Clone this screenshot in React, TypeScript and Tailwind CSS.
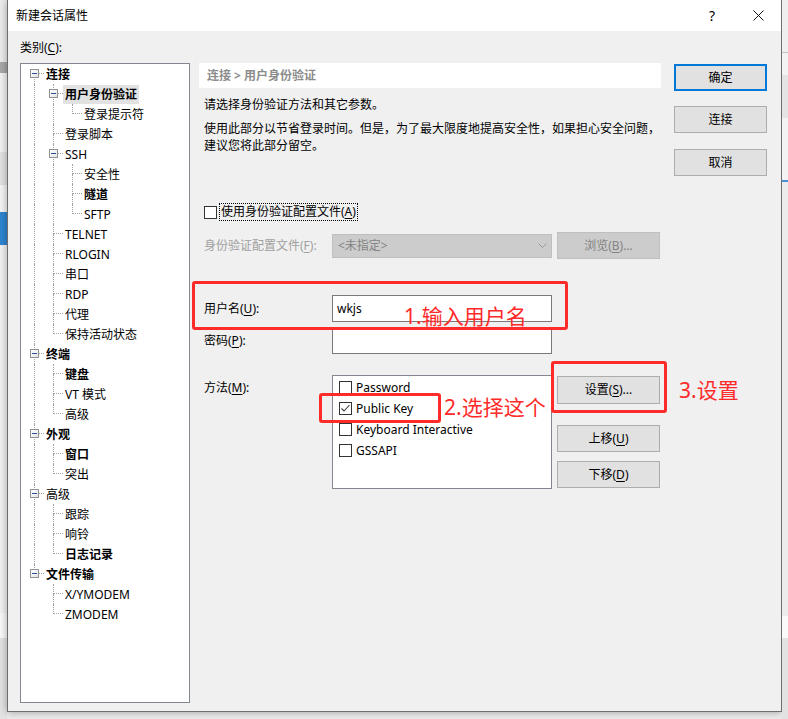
import React from 'react';

type TreeNode = { t: string; l: number; b?: boolean; exp?: boolean; sel?: boolean };

const tree: TreeNode[] = [
  { t: '连接', l: 0, b: true, exp: true },
  { t: '用户身份验证', l: 1, b: true, exp: true, sel: true },
  { t: '登录提示符', l: 2 },
  { t: '登录脚本', l: 1 },
  { t: 'SSH', l: 1, exp: true },
  { t: '安全性', l: 2 },
  { t: '隧道', l: 2, b: true },
  { t: 'SFTP', l: 2 },
  { t: 'TELNET', l: 1 },
  { t: 'RLOGIN', l: 1 },
  { t: '串口', l: 1 },
  { t: 'RDP', l: 1 },
  { t: '代理', l: 1 },
  { t: '保持活动状态', l: 1 },
  { t: '终端', l: 0, b: true, exp: true },
  { t: '键盘', l: 1, b: true },
  { t: 'VT 模式', l: 1 },
  { t: '高级', l: 1 },
  { t: '外观', l: 0, b: true, exp: true },
  { t: '窗口', l: 1, b: true },
  { t: '突出', l: 1 },
  { t: '高级', l: 0, exp: true },
  { t: '跟踪', l: 1 },
  { t: '响铃', l: 1 },
  { t: '日志记录', l: 1, b: true },
  { t: '文件传输', l: 0, b: true, exp: true },
  { t: 'X/YMODEM', l: 1 },
  { t: 'ZMODEM', l: 1 },
];

// does the branch at `level` continue below row i
const continues = (i: number, level: number) => {
  for (let j = i + 1; j < tree.length; j++) {
    if (tree[j].l < level) return false;
    if (tree[j].l === level) return true;
  }
  return false;
};

function Expander() {
  return (
    <div className="absolute left-[5px] top-[5px] w-[9px] h-[9px] border border-[#919191] bg-gradient-to-br from-white to-[#e4e4e4] flex items-center justify-center">
      <div className="w-[5px] h-px bg-[#2f4f94]" />
    </div>
  );
}

function TreeRow({ n, i }: { n: TreeNode; i: number }) {
  return (
    <div className="flex h-5 items-center">
      {Array.from({ length: n.l }).map((_, k) => (
        <div key={k} className="w-[19px] h-5 shrink-0">
          {continues(i, k) && <div className="ml-[9px] h-5 border-l border-dotted border-[#a0a0a0]" />}
        </div>
      ))}
      <div className="relative w-[19px] h-5 shrink-0">
        <div
          className={
            i > 0
              ? 'ml-[9px] h-[10px] border-b border-l border-dotted border-[#a0a0a0]'
              : 'ml-[9px] h-[10px] border-b border-dotted border-[#a0a0a0]'
          }
        />
        {continues(i, n.l) && <div className="ml-[9px] h-[10px] border-l border-dotted border-[#a0a0a0]" />}
        {n.exp && <Expander />}
      </div>
      <span
        className={
          (n.sel ? 'bg-[#e2e2e2] ' : '') +
          (n.b ? 'font-bold ' : '') +
          'px-[2px] h-[19px] leading-[20px] whitespace-nowrap text-black'
        }
      >
        {n.t}
      </span>
    </div>
  );
}

function CheckBox({ checked = false }: { checked?: boolean }) {
  return (
    <div className="w-[13px] h-[13px] shrink-0 border border-[#333333] bg-white">
      {checked && (
        <svg width="11" height="11" viewBox="0 0 11 11">
          <path d="M1.5 5.5 L4 8 L9.5 2" fill="none" stroke="#3a3a3a" strokeWidth="1.1" />
        </svg>
      )}
    </div>
  );
}

const btn = 'flex items-center justify-center bg-[#e1e1e1] border border-[#adadad] text-black';

function Mn({ k }: { k: string }) {
  return <span className="underline underline-offset-2">{k}</span>;
}

export default function App() {
  return (
    <div className="relative w-[788px] h-[719px] overflow-hidden bg-[#ececec] flex text-[12px] font-['Noto_Sans','Noto_Sans_CJK_SC',sans-serif]">
      {/* background window, left edge */}
      <div className="w-[7px] shrink-0 flex flex-col">
        <div className="h-[62px] bg-[#ededed]" />
        <div className="h-[11px] bg-[#a9a9a9]" />
        <div className="h-[79px] bg-[#f3f3f3]" />
        <div className="h-[33px] bg-[#e2e2e2]" />
        <div className="h-[27px] bg-[#f5f5f5]" />
        <div className="h-[33px] bg-[#2f86d3]" />
        <div className="h-[368px] bg-[#f3f3f3]" />
        <div className="h-[25px] bg-[#fafafa]" />
        <div className="flex-1 bg-[#e4e4e4]" />
      </div>

      {/* dialog */}
      <div className="w-[775px] h-[712px] shrink-0 flex flex-col bg-[#f0f0f0] border-x border-b border-[#6e6e6e] shadow-[0_0_8px_rgba(0,0,0,0.35)]">
        <div className="h-[31px] bg-white flex items-center pl-[8px] shrink-0">
          <span className="text-black">新建会话属性</span>
          <div className="ml-auto flex h-full">
            <div className="w-[46px] flex items-center justify-center text-[14px] text-black">?</div>
            <div className="w-[46px] flex items-center justify-center">
              <svg width="11" height="11" viewBox="0 0 11 11">
                <path d="M0.5 0.5 L10.5 10.5 M10.5 0.5 L0.5 10.5" stroke="#111" strokeWidth="1" />
              </svg>
            </div>
          </div>
        </div>

        <div className="flex pt-[9px] pl-[12px]">
          {/* category tree */}
          <div className="w-[170px] shrink-0">
            <div className="h-4 leading-4 text-black">
              类别(<Mn k="C" />):
            </div>
            <div className="mt-[7px] h-[640px] border border-[#828790] bg-white pl-[4px]">
              {tree.map((n, i) => (
                <TreeRow key={i} n={n} i={i} />
              ))}
            </div>
          </div>

          {/* content */}
          <div className="ml-[9px] w-[462px] shrink-0 mt-[23px] text-black">
            <div className="h-[25px] bg-white flex items-center pl-[8px] font-bold text-[#8c8c8c]">
              连接 &gt; 用户身份验证
            </div>
            <p className="mt-[9px] pl-[5px] leading-4">请选择身份验证方法和其它参数。</p>
            <p className="mt-[7px] pl-[5px] leading-[17px] whitespace-nowrap">
              使用此部分以节省登录时间。但是，为了最大限度地提高安全性，如果担心安全问题，
              <br />
              建议您将此部分留空。
            </p>

            <div className="mt-[49px] h-[18px] flex items-center pl-[5px]">
              <CheckBox />
              <span className="ml-[2px] h-[18px] leading-[16px] px-[1px] border border-dotted border-black">
                使用身份验证配置文件(<Mn k="A" />)
              </span>
            </div>

            <div className="mt-[11px] h-[27px] flex items-center pl-[5px]">
              <span className="w-[128px] text-[#a0a0a0]">
                身份验证配置文件(<Mn k="F" />):
              </span>
              <div className="w-[220px] h-[24px] bg-[#cccccc] border border-[#bfbfbf] flex items-center justify-between pl-[5px] pr-[4px] text-[#838383]">
                <span>&lt;未指定&gt;</span>
                <svg width="9" height="6" viewBox="0 0 9 6">
                  <path d="M0.5 0.5 L4.5 4.5 L8.5 0.5" fill="none" stroke="#999" strokeWidth="1" />
                </svg>
              </div>
              <div className="ml-[5px] w-[103px] h-[27px] flex items-center justify-center bg-[#cccccc] border border-[#bfbfbf] text-[#838383]">
                浏览(<Mn k="B" />)...
              </div>
            </div>

            <div className="mt-[36px] h-[27px] flex items-center pl-[5px]">
              <span className="w-[128px]">
                用户名(<Mn k="U" />):
              </span>
              <div className="w-[220px] h-[27px] bg-white border border-[#7a7a7a] flex items-center pl-[4px]">wkjs</div>
            </div>

            <div className="mt-[5px] h-[27px] flex items-center pl-[5px]">
              <span className="w-[128px]">
                密码(<Mn k="P" />):
              </span>
              <div className="w-[220px] h-[27px] bg-white border border-[#7a7a7a]" />
            </div>

            <div className="mt-[21px] flex items-start pl-[5px]">
              <span className="w-[128px] pt-[5px] leading-4">
                方法(<Mn k="M" />):
              </span>
              <div className="w-[220px] h-[114px] bg-white border border-[#828790] pl-[6px] pt-[1px]">
                {[
                  { t: 'Password', c: false },
                  { t: 'Public Key', c: true },
                  { t: 'Keyboard Interactive', c: false },
                  { t: 'GSSAPI', c: false },
                ].map((m) => (
                  <div key={m.t} className="h-[21px] flex items-center gap-[4px]">
                    <CheckBox checked={m.c} />
                    <span className="whitespace-nowrap">{m.t}</span>
                  </div>
                ))}
              </div>
              <div className="ml-[5px] w-[103px] flex flex-col">
                <div className={btn + ' mt-[1px] h-[28px]'}>
                  设置(<Mn k="S" />)...
                </div>
                <div className={btn + ' mt-[21px] h-[27px]'}>
                  上移(<Mn k="U" />)
                </div>
                <div className={btn + ' mt-[9px] h-[27px]'}>
                  下移(<Mn k="D" />)
                </div>
              </div>
            </div>
          </div>

          {/* dialog buttons */}
          <div className="ml-[13px] w-[93px] shrink-0 mt-[24px] flex flex-col">
            <div className="h-[27px] flex items-center justify-center bg-[#e1e1e1] border-2 border-[#0078d7] text-black">确定</div>
            <div className={btn + ' mt-[15px] h-[27px]'}>连接</div>
            <div className={btn + ' mt-[16px] h-[27px]'}>取消</div>
          </div>
        </div>
      </div>

      {/* background window, right edge */}
      <div className="w-[6px] shrink-0 flex flex-col">
        <div className="h-[52px] bg-[#efefef]" />
        <div className="h-px bg-[#c4c4c4]" />
        <div className="h-[22px] bg-[#f3f3f3]" />
        <div className="h-[43px] bg-[#e4e4e4]" />
        <div className="h-[62px] bg-[#f3f3f3]" />
        <div className="h-[2px] bg-[#4a90d9]" />
        <div className="h-[434px] bg-[#ececec]" />
        <div className="h-[22px] bg-[#fafafa]" />
        <div className="flex-1 bg-[#e2e2e2]" />
      </div>

      {/* red annotations */}
      <div className="absolute left-[192px] top-[281px] w-[376px] h-[49px] border-[3px] border-[#ff2b2b] rounded-[3px]" />
      <div className="absolute left-[404px] top-[302px] text-[21px] leading-[28px] text-[#ff2a2a] whitespace-nowrap">1.输入用户名</div>
      <div className="absolute left-[319px] top-[393px] w-[122px] h-[30px] border-[3px] border-[#ff2b2b] rounded-[3px]" />
      <div className="absolute left-[444px] top-[393px] text-[21px] leading-[28px] text-[#ff2a2a] whitespace-nowrap">2.选择这个</div>
      <div className="absolute left-[551px] top-[361px] w-[116px] h-[52px] border-[3px] border-[#ff2b2b] rounded-[3px]" />
      <div className="absolute left-[679px] top-[376px] text-[21px] leading-[28px] text-[#ff2a2a] whitespace-nowrap">3.设置</div>
    </div>
  );
}
